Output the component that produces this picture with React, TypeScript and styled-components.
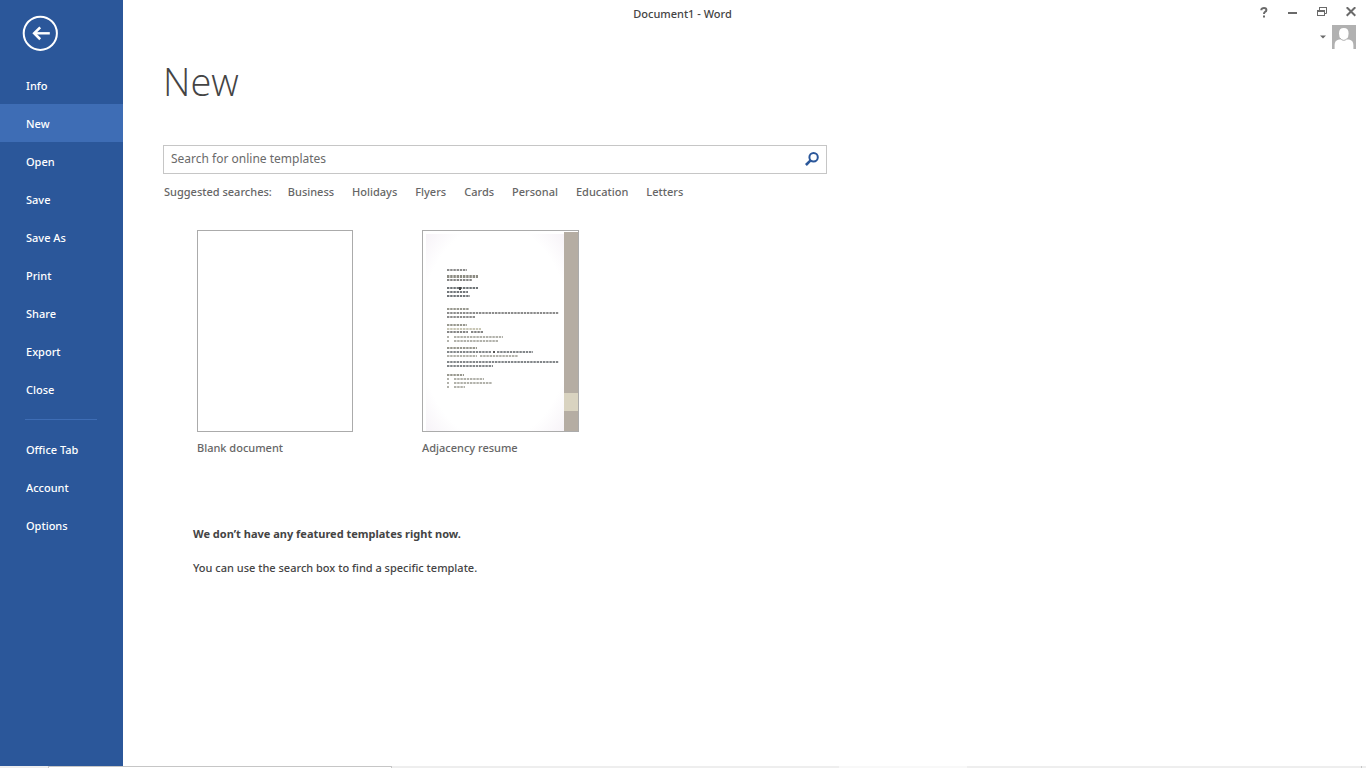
import React from "react";
import styled, { createGlobalStyle } from "styled-components";

const GlobalStyle = createGlobalStyle`
  * { box-sizing: border-box; }
  body {
    margin: 0;
    background: #ffffff;
    color: #444444;
    font: 500 11px/16px "Noto Sans", "Open Sans", sans-serif;
  }
  button, input { font: inherit; color: inherit; }
  a { color: inherit; text-decoration: none; }
  ul { margin: 0; padding: 0; list-style: none; }
`;

const Window = styled.div`
  display: flex;
  flex-direction: column;
  min-height: 100vh;
`;

const Backstage = styled.div`
  display: flex;
  flex: 1;
`;

const Sidebar = styled.nav`
  flex: 0 0 123px;
  background: #2b579a;
  color: #ffffff;
`;

const BackButton = styled.button`
  display: block;
  margin: 15px 0 15px 22px;
  padding: 0;
  width: 36px;
  height: 36px;
  border: 0;
  background: none;
  cursor: pointer;

  svg { display: block; }
`;

const NavButton = styled.button<{ $active?: boolean }>`
  display: block;
  width: 100%;
  height: 38px;
  padding: 2px 26px 0;
  border: 0;
  background: ${(p) => (p.$active ? "#3e6db5" : "transparent")};
  text-align: left;
  white-space: nowrap;
  cursor: pointer;
`;

const Divider = styled.hr`
  height: 1px;
  margin: 11px 26px 10px 25px;
  border: 0;
  background: #3e6db5;
`;

const Main = styled.main`
  display: flex;
  flex: 1;
  flex-direction: column;
  min-width: 0;
`;

const TitleBar = styled.header`
  display: grid;
  grid-template-columns: 1fr auto 1fr;
  align-items: start;
  height: 60px;
`;

const DocumentTitle = styled.div`
  grid-column: 2;
  padding-top: 6px;
  margin-right: 124px;
`;

const WindowTools = styled.div`
  display: flex;
  flex-direction: column;
  align-items: flex-end;
  gap: 1px;
`;

const WindowButtons = styled.div`
  display: flex;
  gap: 9px;
  padding-right: 5px;
`;

const ToolButton = styled.button`
  display: flex;
  align-items: center;
  justify-content: center;
  width: 20px;
  height: 24px;
  padding: 0;
  border: 0;
  background: none;
  cursor: pointer;
`;

const AccountButton = styled.button`
  display: flex;
  align-items: center;
  gap: 6px;
  margin-right: 10px;
  padding: 0;
  border: 0;
  background: none;
  cursor: pointer;
`;

const Content = styled.section`
  padding: 0 40px;
`;

const Heading = styled.h1`
  margin: 0 0 43px;
  font: 300 38px/42px "Open Sans", "Noto Sans", sans-serif;
`;

const SearchBox = styled.form`
  display: flex;
  align-items: center;
  max-width: 664px;
  height: 29px;
  border: 1px solid #c6c6c6;
`;

const SearchInput = styled.input`
  flex: 1;
  min-width: 0;
  height: 27px;
  padding: 0 7px 2px;
  border: 0;
  outline: 0;
  background: transparent;
  font: 400 12px/16px "Noto Sans", sans-serif;

  &::placeholder { color: #6a6a6a; opacity: 1; }
`;

const SearchButton = styled.button`
  display: flex;
  padding: 0 7px 2px 0;
  border: 0;
  background: none;
  cursor: pointer;
`;

const Suggestions = styled.div`
  display: flex;
  flex-wrap: wrap;
  gap: 16px;
  margin-top: 10px;
  padding-left: 1px;
  color: #666666;
`;

const SuggestionList = styled.ul`
  display: flex;
  flex-wrap: wrap;
  gap: 18px;
`;

const TemplateList = styled.ul`
  display: flex;
  flex-wrap: wrap;
  gap: 69px;
  margin-top: 30px;
  padding-left: 34px;
`;

const TemplateCard = styled.button`
  display: flex;
  flex-direction: column;
  gap: 8px;
  padding: 0;
  border: 0;
  background: none;
  color: #666666;
  text-align: left;
  cursor: pointer;

  svg { display: block; }
`;

const BlankPage = styled.span`
  width: 156px;
  height: 202px;
  border: 1px solid #ababab;
  background: #ffffff;
`;

const Notice = styled.div`
  margin-top: 70px;
  padding-left: 30px;

  p { margin: 0 0 18px; }
`;

const StatusEdge = styled.footer`
  display: grid;
  grid-template-columns: 48px 344px 447px 128px 1fr 5px;
  height: 2px;
  background: #eeeeee;
`;

const EdgePart = styled.span<{ $kind?: "field" | "light" | "grip" }>`
  background: ${(p) => (p.$kind === "field" ? "#ffffff" : p.$kind === "light" ? "#f8f8f8" : "#eeeeee")};
  border: 0 solid #c6c6c6;
  border-width: ${(p) => (p.$kind === "field" ? "1px 1px 0" : p.$kind === "grip" ? "0 0 0 1px" : "0")};
`;

/* Each line of the resume preview: x, y, width, colour, thickness */
const resumeLines: [number, number, number, string, number][] = [
  [25, 39, 20, "#8c8c8c", 2],
  [25, 45, 31, "#8c8b82", 3],
  [25, 49, 25, "#858585", 2],
  [25, 57, 31, "#6f7477", 2],
  [25, 61, 21, "#72767a", 2],
  [25, 65, 23, "#72767a", 2],
  [25, 78, 22, "#98988f", 2],
  [25, 82, 112, "#8c8c8c", 2],
  [25, 86, 28, "#8c8c8c", 2],
  [25, 94, 20, "#98988f", 2],
  [25, 98, 34, "#c8c6b5", 2],
  [25, 101, 21, "#858585", 2],
  [49, 101, 12, "#858585", 2],
  [25, 106, 2, "#b2b2ab", 2],
  [32, 106, 49, "#b2b2ab", 2],
  [25, 110, 2, "#b2b2ab", 2],
  [32, 110, 44, "#b2b2ab", 2],
  [25, 117, 30, "#98988f", 2],
  [25, 121, 44, "#83878a", 2],
  [71, 121, 2, "#555555", 2],
  [75, 121, 36, "#83878a", 2],
  [25, 125, 30, "#b2b2ab", 2],
  [58, 125, 38, "#b2b2ab", 2],
  [25, 131, 112, "#83878a", 2],
  [25, 135, 46, "#83878a", 2],
  [25, 144, 17, "#98988f", 2],
  [25, 148, 2, "#b2b2ab", 2],
  [32, 148, 30, "#b2b2ab", 2],
  [25, 152, 2, "#b2b2ab", 2],
  [32, 152, 38, "#b2b2ab", 2],
  [25, 156, 2, "#b2b2ab", 2],
  [32, 156, 11, "#b2b2ab", 2],
];

const ResumePreview = () => (
  <svg width="157" height="202" viewBox="0 0 157 202" aria-hidden="true">
    <defs>
      <radialGradient id="paper" cx="50%" cy="50%" r="72%">
        <stop offset="76%" stopColor="#ffffff" />
        <stop offset="100%" stopColor="#f6f2f7" />
      </radialGradient>
    </defs>
    <rect width="157" height="202" fill="#ffffff" />
    <rect x="4" y="4" width="138" height="197" fill="url(#paper)" />
    <rect x="142" y="2" width="15" height="200" fill="#b5ada3" />
    <rect x="142" y="163" width="15" height="18" fill="#d9d3c0" />
    {resumeLines.map(([x, y, w, color, h]) => (
      <line
        key={`${x}-${y}`}
        x1={x}
        x2={x + w}
        y1={y + h / 2}
        y2={y + h / 2}
        stroke={color}
        strokeWidth={h}
        strokeDasharray="2.4 0.8"
      />
    ))}
    <rect x="37" y="57" width="2" height="3" fill="#444444" />
    <rect x="0.5" y="0.5" width="156" height="201" fill="none" stroke="#ababab" />
  </svg>
);

const BackIcon = () => (
  <svg width="36" height="36" viewBox="0 0 36 36" fill="none" stroke="#ffffff" aria-hidden="true">
    <circle cx="18.3" cy="18.3" r="16.6" strokeWidth="2" />
    <path d="M27.8 18.3H12" strokeWidth="2.4" />
    <path d="M18.2 12.4L12.2 18.3L18.2 24.2" strokeWidth="2.6" />
  </svg>
);

const SearchIcon = () => (
  <svg width="14" height="14" viewBox="0 0 14 14" fill="none" stroke="#2b579a" aria-hidden="true">
    <circle cx="8.6" cy="5.3" r="4.2" strokeWidth="2" />
    <path d="M5.6 8.4L0.9 13" strokeWidth="2.6" />
  </svg>
);

const HelpIcon = () => (
  <svg width="10" height="11" viewBox="0 0 10 11" fill="none" stroke="#6a6a6a" aria-hidden="true">
    <path d="M2.4 3.2V2.2Q3 1 5 1Q7.4 1 7.4 2.9Q7.4 4.2 6 4.9Q5 5.4 5 7" strokeWidth="2" />
    <path d="M5 8.4V10.4" strokeWidth="2" />
  </svg>
);

const MinimizeIcon = () => (
  <svg width="10" height="10" viewBox="0 0 10 10" aria-hidden="true">
    <rect x="0" y="5" width="9" height="2" fill="#6a6a6a" />
  </svg>
);

const RestoreIcon = () => (
  <svg width="10" height="10" viewBox="0 0 10 10" fill="none" stroke="#6a6a6a" aria-hidden="true">
    <path d="M2.5 3V0.5H9.5V6.5H8" />
    <path d="M2 0.5H10" />
    <rect x="0.5" y="3.5" width="7" height="5" fill="#ffffff" />
    <path d="M0 4H8" strokeWidth="2" />
  </svg>
);

const CloseIcon = () => (
  <svg width="10" height="10" viewBox="0 0 10 10" stroke="#6a6a6a" strokeWidth="2" aria-hidden="true">
    <path d="M0.7 0.2L9.3 8.8M9.3 0.2L0.7 8.8" />
  </svg>
);

const AvatarIcon = () => (
  <svg width="24" height="24" viewBox="0 0 24 24" aria-hidden="true">
    <rect width="24" height="24" fill="#b1b1b1" />
    <path d="M2.6 24V20Q2.6 15.3 7 14.4H9Q7 12 7 8.4Q7 3 11.8 3Q16.6 3 16.6 8.4Q16.6 12 14.6 14.4H17Q21.4 15.3 21.4 20V24Z" fill="#ffffff" />
    <path d="M8 13Q9.6 15.4 11.8 15.4Q14 15.4 15.6 13" fill="none" stroke="#b1b1b1" />
  </svg>
);

const primaryItems = ["Info", "New", "Open", "Save", "Save As", "Print", "Share", "Export", "Close"];
const secondaryItems = ["Office Tab", "Account", "Options"];
const suggestions = ["Business", "Holidays", "Flyers", "Cards", "Personal", "Education", "Letters"];

export default function App() {
  return (
    <Window>
      <GlobalStyle />
      <Backstage>
        <Sidebar>
          <BackButton aria-label="Back"><BackIcon /></BackButton>
          {primaryItems.map((item) => (
            <NavButton key={item} $active={item === "New"}>{item}</NavButton>
          ))}
          <Divider />
          {secondaryItems.map((item) => (
            <NavButton key={item}>{item}</NavButton>
          ))}
        </Sidebar>
        <Main>
          <TitleBar>
            <DocumentTitle>Document1 - Word</DocumentTitle>
            <WindowTools>
              <WindowButtons>
                <ToolButton aria-label="Help"><HelpIcon /></ToolButton>
                <ToolButton aria-label="Minimize"><MinimizeIcon /></ToolButton>
                <ToolButton aria-label="Restore"><RestoreIcon /></ToolButton>
                <ToolButton aria-label="Close window"><CloseIcon /></ToolButton>
              </WindowButtons>
              <AccountButton aria-label="Account menu">
                <svg width="6" height="4" viewBox="0 0 6 4" aria-hidden="true">
                  <path d="M0 0.5H6L3 3.5Z" fill="#6a6a6a" />
                </svg>
                <AvatarIcon />
              </AccountButton>
            </WindowTools>
          </TitleBar>
          <Content>
            <Heading>New</Heading>
            <SearchBox onSubmit={(e) => e.preventDefault()}>
              <SearchInput aria-label="Search for online templates" placeholder="Search for online templates" />
              <SearchButton aria-label="Search"><SearchIcon /></SearchButton>
            </SearchBox>
            <Suggestions>
              <span>Suggested searches:</span>
              <SuggestionList>
                {suggestions.map((name) => (
                  <li key={name}><a href="#templates">{name}</a></li>
                ))}
              </SuggestionList>
            </Suggestions>
            <TemplateList id="templates">
              <li><TemplateCard><BlankPage />Blank document</TemplateCard></li>
              <li><TemplateCard><ResumePreview />Adjacency resume</TemplateCard></li>
            </TemplateList>
            <Notice>
              <p><strong>We don’t have any featured templates right now.</strong></p>
              <p>You can use the search box to find a specific template.</p>
            </Notice>
          </Content>
        </Main>
      </Backstage>
      <StatusEdge>
        <EdgePart />
        <EdgePart $kind="field" />
        <EdgePart />
        <EdgePart $kind="light" />
        <EdgePart />
        <EdgePart $kind="grip" />
      </StatusEdge>
    </Window>
  );
}
